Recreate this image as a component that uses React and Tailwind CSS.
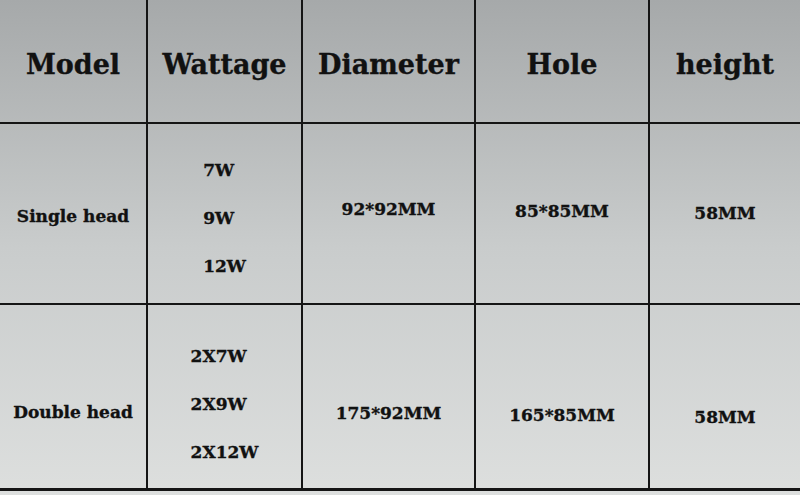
import React from 'react';

const serif = { fontFamily: '"DejaVu Serif", "Liberation Serif", serif' };

const headers = ['Model', 'Wattage', 'Diameter', 'Hole', 'height'];

// per-row nudges so the text sits where it does on the printed sheet
const rows = [
  {
    model: 'Single head', watts: ['7W', '9W', '12W'], diameter: '92*92MM', hole: '85*85MM', height: '58MM',
    pad: ['pt-[6px]', 'pt-[8px]', 'pb-[8px]', 'pb-[4px]', 'pb-[0px]'],
  },
  {
    model: 'Double head', watts: ['2X7W', '2X9W', '2X12W'], diameter: '175*92MM', hole: '165*85MM', height: '58MM',
    pad: ['pt-[32px]', 'pt-[14px]', 'pt-[34px]', 'pt-[38px]', 'pt-[42px]'],
  },
];

const Cell = ({ first, className = '', children }) => (
  <div className={`flex items-center justify-center ${first ? '' : 'border-l-2 border-[#151515]'} ${className}`}>
    {children}
  </div>
);

const body = 'border-t-2 border-t-[#151515] font-bold text-[17px]';

export default function App() {
  return (
    <div className="w-[800px] h-[495px] overflow-hidden bg-linear-to-b from-[#a6a9aa] via-[#c9cccc] to-[#dddfde] text-[#111] [-webkit-text-stroke:0.35px_#111]" style={serif}>
      <div className="grid grid-cols-[146px_155px_173px_174px_152px] grid-rows-[122px_181px_185px] border-b-[3px] border-[#151515]">
        {headers.map((h, i) => (
          <Cell key={h} first={i === 0} className="text-[27px] font-bold pt-[8px]">
            {h}
          </Cell>
        ))}

        {rows.map((r) => (
          <React.Fragment key={r.model}>
            <Cell first className={`${body} ${r.pad[0]}`}>
              {r.model}
            </Cell>
            <Cell className={`${body} ${r.pad[1]}`}>
              <div className="flex flex-col items-start gap-[24px] leading-[24px]">
                {r.watts.map((w) => (
                  <span key={w}>{w}</span>
                ))}
              </div>
            </Cell>
            <Cell className={`${body} ${r.pad[2]}`}>{r.diameter}</Cell>
            <Cell className={`${body} ${r.pad[3]}`}>{r.hole}</Cell>
            <Cell className={`${body} ${r.pad[4]}`}>{r.height}</Cell>
          </React.Fragment>
        ))}
      </div>
    </div>
  );
}
